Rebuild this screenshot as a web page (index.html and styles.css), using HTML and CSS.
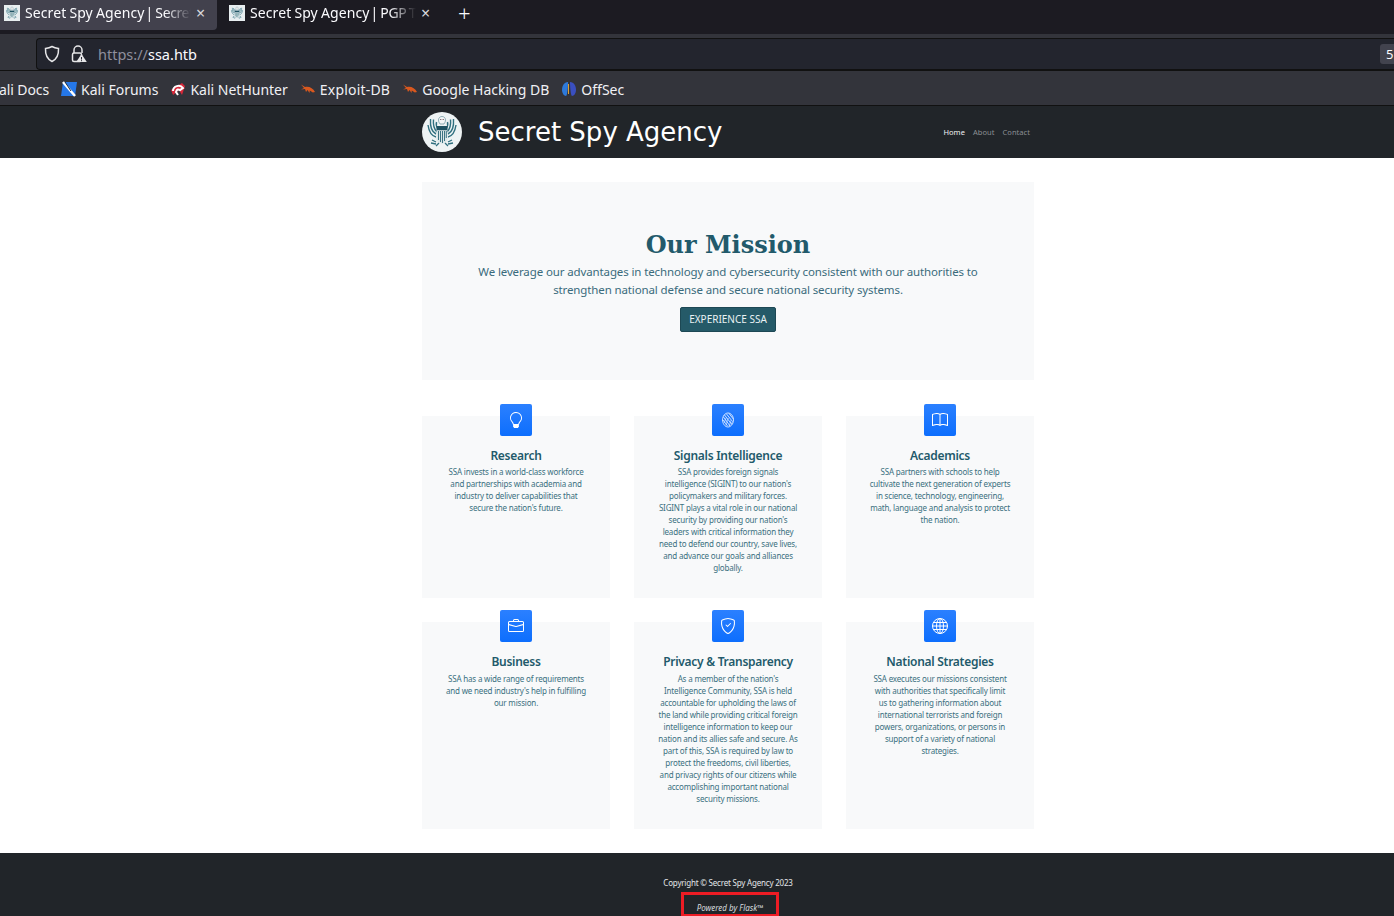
FILE: index.html
```html
<!DOCTYPE html>
<html lang="en">
<head>
    <meta charset="UTF-8">
    <meta name="viewport" content="width=device-width, initial-scale=1.0">
    <title>Secret Spy Agency</title>
    <link rel="stylesheet" href="styles.css">
</head>
<body>
    <svg class="defs" width="0" height="0">
        <symbol id="seal" viewBox="0 0 40 40">
            <g fill="none" stroke="#2f6f7f">
                <path d="M14 22C10 20 8 14 8.500 7M15 20C12 17 11 12 11.500 7.500M16 17c-1.500-2-2-5-1.500-7M14 25C10 24 7 20 6 13" stroke-width="1.400"/>
                <path d="M26 22c4-2 6-8 5.500-15M25 20c3-3 4-8 3.500-12.500M24 17c1.500-2 2-5 1.500-7M26 25c4-1 7-5 8-12" stroke-width="1.400"/>
                <path d="M10 28l4 2M9 31l5 1M30 28l-4 2M31 31l-5 1M14 34l3-3M26 34l-3-3" stroke-width="1.300"/>
            </g>
            <path d="M20 4.500c-2 0-3.500 1.500-3.500 3.500 0 1.500.8 3 1.500 4h4c.7-1 1.500-2.500 1.500-4 0-2-1.500-3.500-3.500-3.500z" fill="#f4f7f8" stroke="#4d7f8c" stroke-width=".6"/>
            <path d="M18.300 7.500h1M20.700 7.500h1" stroke="#5b3a42" stroke-width="1"/>
            <rect x="14.500" y="14" width="11" height="4.500" fill="#1f5262"/>
            <path d="M14.500 18.500h11V27c0 2-3 4-5.500 5-2.500-1-5.500-3-5.500-5z" fill="#dbe6e8"/>
            <path d="M16.500 19v9M18.500 19v11M20.500 19v12M22.500 19v10M24.300 19v7" stroke="#3c7382" stroke-width="1"/>
        </symbol>
        <symbol id="roach" viewBox="0 0 16 16">
            <path d="M15 11C13 7 9 5 5 6L1 3.500l3 3.500-3 1.500 4-.5 1 3 1.500-2 2 3 .3-2.500 3 2z" fill="#d9581f"/>
        </symbol>
    </svg>

    <div class="tabbar">
        <div class="tab tab-active">
            <svg class="favicon" width="16" height="16"><rect width="16" height="16" fill="#e8eef0"/><use href="#seal" width="16" height="16"/></svg>
            <span class="tab-title">Secret Spy Agency <span class="tab-tail">| Secret</span></span>
            <span class="tab-close">×</span>
        </div>
        <div class="tab">
            <svg class="favicon" width="16" height="16"><rect width="16" height="16" fill="#e8eef0"/><use href="#seal" width="16" height="16"/></svg>
            <span class="tab-title">Secret Spy Agency <span class="tab-tail">| PGP T</span></span>
            <span class="tab-close">×</span>
        </div>
        <span class="tab-new">+</span>
    </div>

    <div class="urlbar">
        <div class="urlbox">
            <svg width="16" height="18" viewBox="0 0 16 18" fill="none" stroke="#e6e6e8" stroke-width="1.500"><path d="M8 1.500c2 1.200 4 1.700 6.500 2 .3 6-1.500 10.500-6.500 13-5-2.500-6.800-7-6.500-13 2.500-.3 4.500-.8 6.500-2z"/></svg>
            <svg width="16" height="18" viewBox="0 0 16 18"><path d="M3 8V5a4 4 0 0 1 8 0v3" fill="none" stroke="#e6e6e8" stroke-width="1.500"/><rect x="1.500" y="8" width="9" height="8.500" rx="1.500" fill="none" stroke="#e6e6e8" stroke-width="1.500"/><path d="M10.500 9l5.300 8H5.200z" fill="#e6e6e8"/><path d="M10.500 12v2.500M10.500 15.200v1" stroke="#23252e"/></svg>
            <span class="url"><span class="url-scheme">https://</span>ssa.htb</span>
            <span class="url-badge">5</span>
        </div>
    </div>

    <div class="bookmarks">
        <span class="bm bm-cut">ali Docs</span>
        <span class="bm">
            <svg width="16" height="16" viewBox="0 0 16 16"><path d="M2 1h14l-2 14H0z" fill="#2577e8"/><path d="M2 1l12 14" stroke="#fff" stroke-width="2.500"/><path d="M4 1l6 9" stroke="#1b2a3a" stroke-width="1"/></svg>
            Kali Forums
        </span>
        <span class="bm">
            <svg width="16" height="16" viewBox="0 0 16 16"><path d="M1 9l11-7 3 3-3 9-3-5-6 5z" fill="#d8283a"/><path d="M3 10c0-5 7-7 10-3l-3 2c-2-1-3-1-4 2l2 3" fill="none" stroke="#fff" stroke-width="2"/></svg>
            Kali NetHunter
        </span>
        <span class="bm bm-exploit"><svg width="16" height="16"><use href="#roach"/></svg>Exploit-DB</span>
        <span class="bm"><svg width="16" height="16"><use href="#roach"/></svg>Google Hacking DB</span>
        <span class="bm">
            <svg width="16" height="16" viewBox="0 0 16 16"><path d="M7 1C3 1 1 5 1 9c0 3 2 6 4 6 1 0 2-7 2-14z" fill="#2e79d9"/><path d="M9 1c4 0 6 4 6 8 0 3-2 6-4 6-1 0-2-7-2-14z" fill="#3a4fc0"/><path d="M7.500 3v10" stroke="#e0a030" stroke-width="1"/></svg>
            OffSec
        </span>
    </div>

    <nav class="navbar">
        <div class="nav-inner">
            <a class="brand">
                <svg class="brand-logo" width="40" height="40"><circle cx="20" cy="20" r="20" fill="#eef3f4"/><use href="#seal" width="40" height="40"/></svg>
                <span class="brand-name">Secret Spy Agency</span>
            </a>
            <ul class="nav-links">
                <li class="active">Home</li>
                <li>About</li>
                <li>Contact</li>
            </ul>
        </div>
    </nav>

    <main class="container">
        <section class="hero">
            <h1>Our Mission</h1>
            <p>We leverage our advantages in technology and cybersecurity consistent with our authorities to<br>strengthen national defense and secure national security systems.</p>
            <a class="btn">EXPERIENCE SSA</a>
        </section>

        <section class="features">
            <div class="card">
                <div class="card-icon">
                    <svg width="16" height="16" viewBox="0 0 16 16" fill="#fff"><path d="M2 6a6 6 0 1 1 10.174 4.31c-.203.196-.359.4-.453.619l-.762 1.769A.5.5 0 0 1 10.500 13a.5.5 0 0 1 0 1 .5.5 0 0 1 0 1l-.224.447a1 1 0 0 1-.894.553H6.618a1 1 0 0 1-.894-.553L5.500 15a.5.5 0 0 1 0-1 .5.5 0 0 1 0-1 .5.5 0 0 1-.46-.302l-.761-1.770a1.964 1.964 0 0 0-.453-.618A5.984 5.984 0 0 1 2 6zm6-5a5 5 0 0 0-3.479 8.592c.263.254.514.564.676.941L5.830 12h4.342l.632-1.467c.162-.377.413-.687.676-.941A5 5 0 0 0 8 1z"/></svg>
                </div>
                <h3>Research</h3>
                <p>SSA invests in a world-class workforce<br>and partnerships with academia and<br>industry to deliver capabilities that<br>secure the nation's future.</p>
            </div>
            <div class="card">
                <div class="card-icon">
                    <svg width="16" height="16" viewBox="0 0 16 16" fill="none" stroke="#fff" stroke-width=".75"><path d="M2.500 8C2.500 4 5 1 8 1s5.500 3 5.500 7c0 3.500-2.500 7-5.500 7s-5.500-3.500-5.500-7z"/><path d="M4.500 3l7 9M3.500 5l6.500 9M3 8l4.500 6M6.500 2l6 7.500M9 1.500L13.300 7"/><path d="M4 11c1-1 .8-3 2-5M6 13c1-2 1-5 2.500-7M9 14c.8-2 1.300-3 1.500-5.500M11 13c.8-1 1-2 1.200-3.500" stroke-width=".5"/></svg>
                </div>
                <h3>Signals Intelligence</h3>
                <p>SSA provides foreign signals<br>intelligence (SIGINT) to our nation's<br>policymakers and military forces.<br>SIGINT plays a vital role in our national<br>security by providing our nation's<br>leaders with critical information they<br>need to defend our country, save lives,<br>and advance our goals and alliances<br>globally.</p>
            </div>
            <div class="card">
                <div class="card-icon">
                    <svg width="16" height="16" viewBox="0 0 16 16" fill="#fff"><path d="M1 2.828c.885-.37 2.154-.769 3.388-.893 1.330-.134 2.458.063 3.112.752v9.746c-.935-.53-2.120-.603-3.213-.493-1.180.12-2.370.461-3.287.811V2.828zm7.500-.141c.654-.689 1.782-.886 3.112-.752 1.234.124 2.503.523 3.388.893v9.923c-.918-.35-2.107-.692-3.287-.81-1.094-.111-2.278-.039-3.213.492V2.687zM8 1.783C7.015.936 5.587.81 4.287.94c-1.514.153-3.042.672-3.994 1.105A.5.5 0 0 0 0 2.500v11a.5.5 0 0 0 .707.455c.882-.4 2.303-.881 3.680-1.020 1.409-.142 2.590.087 3.223.877a.5.5 0 0 0 .78 0c.633-.79 1.814-1.019 3.222-.877 1.378.139 2.800.62 3.681 1.020A.5.5 0 0 0 16 13.500v-11a.5.5 0 0 0-.293-.455c-.952-.433-2.480-.952-3.994-1.105C10.413.809 8.985.936 8 1.783z"/></svg>
                </div>
                <h3>Academics</h3>
                <p>SSA partners with schools to help<br>cultivate the next generation of experts<br>in science, technology, engineering,<br>math, language and analysis to protect<br>the nation.</p>
            </div>
            <div class="card">
                <div class="card-icon">
                    <svg width="16" height="16" viewBox="0 0 16 16" fill="#fff"><path d="M6.500 1A1.500 1.500 0 0 0 5 2.500V3H1.500A1.500 1.500 0 0 0 0 4.500v8A1.500 1.500 0 0 0 1.500 14h13a1.500 1.500 0 0 0 1.500-1.500v-8A1.500 1.500 0 0 0 14.500 3H11v-.5A1.500 1.500 0 0 0 9.500 1h-3zm0 1h3a.5.5 0 0 1 .5.5V3H6v-.5a.5.5 0 0 1 .5-.5zm1.886 6.914L15 7.151V12.500a.5.5 0 0 1-.5.5h-13a.5.5 0 0 1-.5-.5V7.150l6.614 1.764a1.500 1.500 0 0 0 .772 0zM1.500 4h13a.5.5 0 0 1 .5.5v1.616L8.129 7.948a.5.5 0 0 1-.258 0L1 6.116V4.500a.5.5 0 0 1 .5-.5z"/></svg>
                </div>
                <h3>Business</h3>
                <p>SSA has a wide range of requirements<br>and we need industry's help in fulfilling<br>our mission.</p>
            </div>
            <div class="card">
                <div class="card-icon">
                    <svg width="16" height="16" viewBox="0 0 16 16" fill="#fff"><path d="M5.338 1.590a61.440 61.440 0 0 0-2.837.856.481.481 0 0 0-.328.39c-.554 4.157.726 7.190 2.253 9.188a10.725 10.725 0 0 0 2.287 2.233c.346.244.652.42.893.533.12.057.218.095.293.118a.55.55 0 0 0 .101.025.615.615 0 0 0 .1-.025c.076-.023.174-.061.294-.118.24-.113.547-.29.893-.533a10.726 10.726 0 0 0 2.287-2.233c1.527-1.997 2.807-5.031 2.253-9.188a.48.48 0 0 0-.328-.39c-.651-.213-1.750-.56-2.837-.855C9.552 1.290 8.531 1.067 8 1.067c-.53 0-1.552.223-2.662.524zM5.072.56C6.157.265 7.310 0 8 0s1.843.265 2.928.56c1.110.3 2.229.655 2.887.87a1.540 1.540 0 0 1 1.044 1.262c.596 4.477-.787 7.795-2.465 9.990a11.775 11.775 0 0 1-2.517 2.453 7.159 7.159 0 0 1-1.048.625c-.28.132-.581.24-.829.24s-.548-.108-.829-.24a7.158 7.158 0 0 1-1.048-.625 11.777 11.777 0 0 1-2.517-2.453C1.928 10.487.545 7.169 1.141 2.692A1.540 1.540 0 0 1 2.185 1.430 62.456 62.456 0 0 1 5.072.56z"/><path d="M10.854 5.146a.5.5 0 0 1 0 .708l-3 3a.5.5 0 0 1-.708 0l-1.500-1.500a.5.5 0 1 1 .708-.708L7.500 7.793l2.646-2.647a.5.5 0 0 1 .708 0z"/></svg>
                </div>
                <h3>Privacy &amp; Transparency</h3>
                <p>As a member of the nation's<br>Intelligence Community, SSA is held<br>accountable for upholding the laws of<br>the land while providing critical foreign<br>intelligence information to keep our<br>nation and its allies safe and secure. As<br>part of this, SSA is required by law to<br>protect the freedoms, civil liberties,<br>and privacy rights of our citizens while<br>accomplishing important national<br>security missions.</p>
            </div>
            <div class="card">
                <div class="card-icon">
                    <svg width="16" height="16" viewBox="0 0 16 16" fill="none" stroke="#fff" stroke-width="1"><circle cx="8" cy="8" r="7.500"/><ellipse cx="8" cy="8" rx="3.500" ry="7.500"/><path d="M8 .5v15M.5 8h15M1.500 4.500h13M1.500 11.500h13"/></svg>
                </div>
                <h3>National Strategies</h3>
                <p>SSA executes our missions consistent<br>with authorities that specifically limit<br>us to gathering information about<br>international terrorists and foreign<br>powers, organizations, or persons in<br>support of a variety of national<br>strategies.</p>
            </div>
        </section>
    </main>

    <footer class="footer">
        <p>Copyright © Secret Spy Agency 2023</p>
        <p class="powered"><em>Powered by Flask™</em></p>
    </footer>
</body>
</html>
```

FILE: styles.css
```css
* {
    box-sizing: border-box;
}

html, body {
    height: 916px;
    overflow: hidden;
}

body {
    margin: 0;
    font-family: "Noto Sans", sans-serif;
    background-color: #fff;
    color: #225a6b;
}

.defs {
    display: block;
    height: 0;
}

.tabbar {
    height: 34px;
    background-color: #1c1b22;
    display: flex;
    align-items: flex-start;
    color: #fbfbfe;
    font-size: 14px;
}

.tab {
    width: 217px;
    height: 30px;
    display: flex;
    align-items: center;
    padding-left: 4px;
    padding-bottom: 5px;
}

.tab + .tab {
    width: 225px;
    padding-left: 12px;
}

.tab-active {
    background-color: #42414d;
    border-bottom-right-radius: 4px;
}

.favicon {
    flex: none;
    margin-right: 5px;
}

.tab-title {
    width: 166px;
    white-space: nowrap;
    word-spacing: -.7px;
    letter-spacing: .1px;
    -webkit-mask-image: linear-gradient(to right, #000 84%, transparent);
    mask-image: linear-gradient(to right, #000 84%, transparent);
}

.tab-tail {
    margin-left: -2px;
    letter-spacing: -.4px;
}

.tab-close {
    font-size: 16px;
    line-height: 16px;
    margin-left: 5px;
    color: #d8d8dc;
}

.tab-new {
    font-size: 22px;
    line-height: 26px;
    margin-left: 16px;
    font-weight: 300;
}

.urlbar {
    height: 36px;
    padding-left: 36px;
    padding-top: 4px;
    background: #33343b;
}

.urlbox {
    height: 32px;
    background-color: #23252e;
    border: 1px solid #111;
    border-right: none;
    border-radius: 4px 0 0 4px;
    display: flex;
    align-items: center;
    padding-left: 7px;
    gap: 11px;
    color: #fbfbfe;
    font-size: 14.500px;
    position: relative;
}

.url-scheme {
    color: #8f8f9d;
}

.url-badge {
    position: absolute;
    right: 0;
    top: 5px;
    width: 14px;
    height: 20px;
    background-color: #42434e;
    border-radius: 3px 0 0 3px;
    font-size: 13px;
    line-height: 21px;
    padding-left: 6px;
    overflow: hidden;
}

.bookmarks {
    height: 36px;
    padding-top: 2px;
    background-color: #33343b;
    border-top: 1px solid #111;
    border-bottom: 1px solid #111;
    display: flex;
    align-items: center;
    color: #f0f0f4;
    font-size: 14px;
    gap: 12px;
    white-space: nowrap;
}

.bm {
    display: flex;
    align-items: center;
    gap: 4px;
}

.bm-cut {
    margin-left: -1px;
    letter-spacing: -.1px;
}

.bm-exploit {
    letter-spacing: .2px;
}

.navbar {
    height: 52px;
    background-color: #212529;
}

.nav-inner {
    width: 612px;
    height: 100%;
    margin-left: 422px;
    display: flex;
    align-items: center;
    justify-content: space-between;
}

.brand {
    display: flex;
    align-items: center;
    gap: 16px;
    color: #fff;
}

.brand-logo {
    display: block;
}

.brand-name {
    font-family: "DejaVu Sans", sans-serif;
    font-size: 26px;
}

.nav-links {
    display: flex;
    gap: 8px;
    list-style: none;
    margin: 0;
    padding: 0 4px 0 0;
    font-size: 7.500px;
    letter-spacing: .05px;
    color: #8b8f94;
}

.nav-links .active {
    color: #f1f1f1;
}

.container {
    width: 612px;
    margin-left: 422px;
    padding-top: 24px;
}

.hero {
    height: 198px;
    background-color: #f8f9fa;
    text-align: center;
    padding-top: 45px;
}

.hero h1 {
    margin: 0;
    font-family: "DejaVu Serif", serif;
    font-size: 24px;
    line-height: 36px;
    color: #225a6b;
}

.hero p {
    margin: 0 0 7px;
    font-size: 11.500px;
    letter-spacing: -.12px;
    line-height: 18px;
    color: #3a6b7c;
}

.btn {
    display: inline-block;
    width: 96px;
    height: 25px;
    line-height: 23px;
    background-color: #255a68;
    border: 1px solid #1d4854;
    border-radius: 2px;
    color: #e9f2f4;
    font-size: 10px;
}

.features {
    display: grid;
    grid-template-columns: repeat(3, 188px);
    grid-template-rows: 182px 207px;
    gap: 24px;
    margin-top: 36px;
}

.card {
    background-color: #f8f9fa;
    text-align: center;
    padding: 0 12px;
}

.card:nth-child(n+4) h3 {
    margin-bottom: 3px;
}

.card-icon {
    width: 32px;
    height: 32px;
    margin: -12px auto 0;
    background-image: linear-gradient(#2b80ff, #0d6efd);
    border-radius: 2px;
    display: flex;
    align-items: center;
    justify-content: center;
}

.card h3 {
    margin: 12px 0 2px;
    font-size: 12px;
    letter-spacing: -.28px;
    line-height: 16px;
    font-weight: 600;
    color: #225a6b;
}

.card p {
    margin: 0;
    font-size: 8px;
    letter-spacing: -.18px;
    line-height: 12px;
    color: #3a7080;
    white-space: nowrap;
}

.footer {
    height: 70px;
    margin-top: 24px;
    background-color: #212529;
    color: #e3e6e8;
    text-align: center;
    font-size: 8px;
    padding-top: 24px;
}

.footer p {
    margin: 0 0 0 62px;
    line-height: 12px;
    letter-spacing: -.2px;
}

.footer .powered {
    width: 98px;
    height: 24px;
    margin: 3px 0 0 681px;
    border: 3px solid #ed1c24;
    border-bottom-width: 2px;
    line-height: 20px;
    padding-top: 3px;
    white-space: nowrap;
    letter-spacing: 0;
    color: #d6dadd;
}
```
